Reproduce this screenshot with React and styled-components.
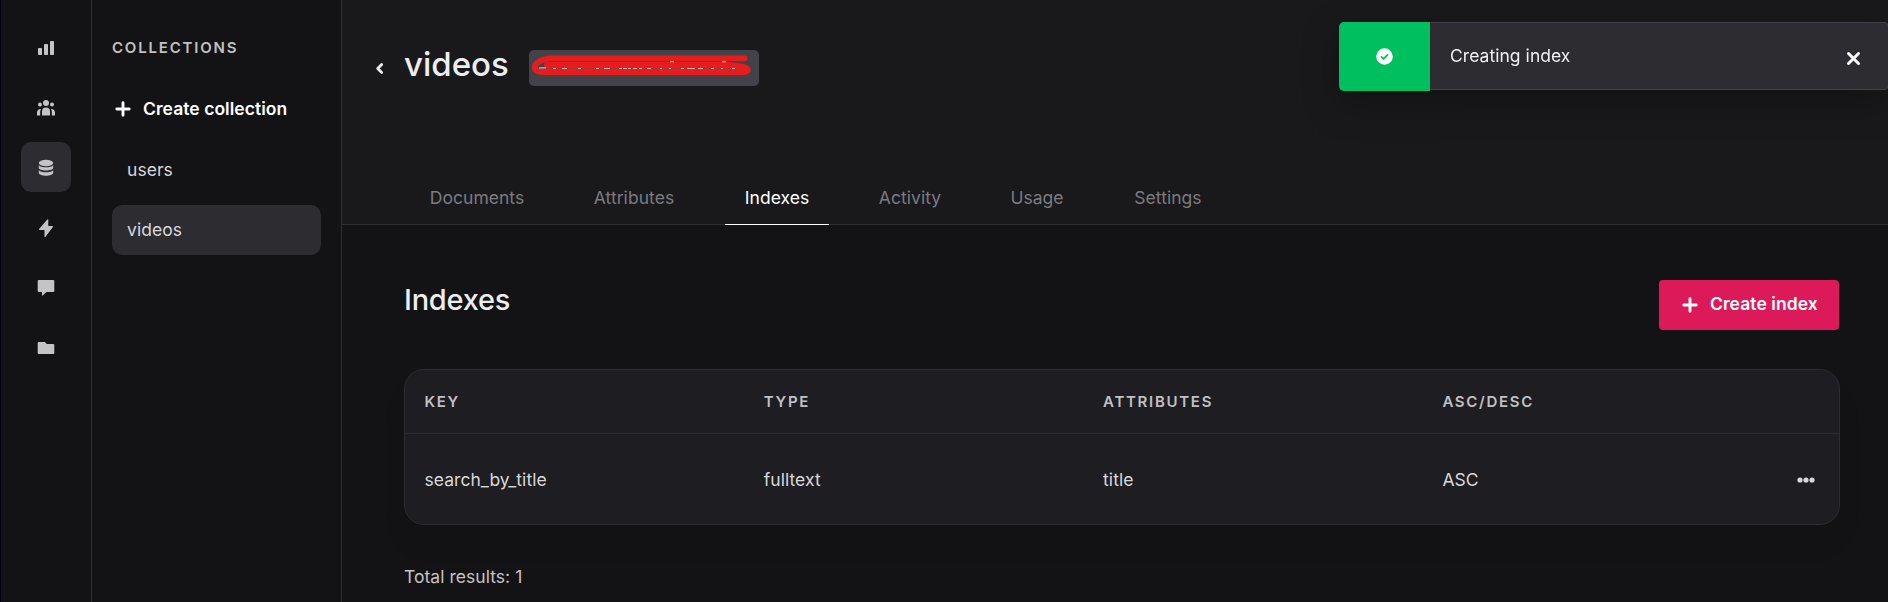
import React from "react";
import styled, { createGlobalStyle } from "styled-components";

const Global = createGlobalStyle`
  *, *::before, *::after { box-sizing: border-box; }
  html, body { margin: 0; padding: 0; background: #131315; }
  body { font-family: Inter, "Liberation Sans", sans-serif; font-size: 17.5px; letter-spacing: 0.04px; color: #d8d8db; overflow: hidden; }
  svg { display: block; flex: none; }
  button { font: inherit; color: inherit; background: none; border: 0; padding: 0; }
`;

const Page = styled.div`
  display: flex;
  width: 100%;
  height: 602px;
  position: relative;
  border-left: 1px solid #02030f;
  background: #131315;
  overflow: hidden;
`;

const Rail = styled.nav`
  flex: none;
  width: 91px;
  border-right: 1px solid #303034;
  padding: 22px 0 0 20px;
  display: flex;
  flex-direction: column;
  gap: 10px;
`;

const RailItem = styled.a`
  width: 50px;
  height: 50px;
  padding-top: 2px;
  border-radius: 10px;
  display: flex;
  align-items: center;
  justify-content: center;
  color: #c4c4c7;
  background: ${(p) => (p.$active ? "#2c2c31" : "transparent")};
`;

const Sidebar = styled.aside`
  flex: none;
  width: 250px;
  border-right: 1px solid #303034;
  padding: 38px 20px 0;
`;

const SideTitle = styled.h2`
  margin: 0;
  font-size: 15px;
  line-height: 20px;
  font-weight: 600;
  letter-spacing: 1.8px;
  color: #c1c1c4;
`;

const CreateLink = styled.button`
  display: flex;
  align-items: center;
  gap: 12px;
  margin-top: 37px;
  padding-left: 3px;
  height: 28px;
  font-weight: 600;
  color: #fff;
  letter-spacing: 0.05px;

  span { padding-bottom: 2px; }
`;

const SideList = styled.div`
  margin-top: 22px;
  display: flex;
  flex-direction: column;
  gap: 10px;
`;

const SideItem = styled.a`
  height: 50px;
  padding: 0 15px 2px;
  border-radius: 10px;
  display: flex;
  align-items: center;
  background: ${(p) => (p.$active ? "#2c2c31" : "transparent")};
`;

const Main = styled.main`
  flex: 1;
  min-width: 0;
`;

const Header = styled.header`
  height: 225px;
  background: #19191b;
  border-bottom: 1px solid #2d2d31;
  display: flex;
  flex-direction: column;
  justify-content: space-between;
`;

const TitleRow = styled.div`
  display: flex;
  align-items: flex-start;
  padding: 44px 0 0 33px;
`;

const BackButton = styled.button`
  padding: 18px 20px 0 0;
`;

const Title = styled.h1`
  margin: 0;
  font-size: 33px;
  line-height: 40px;
  font-weight: 540;
  letter-spacing: 0;
  color: #ededf0;
`;

const SectionTitle = styled(Title)`
  font-size: 29px;
  letter-spacing: -0.25px;
`;

const IdTag = styled.div`
  width: 230px;
  height: 36px;
  margin: 6px 0 0 20px;
  border-radius: 5px;
  background: #434248;
`;

const Tabs = styled.div`
  display: flex;
  gap: 31px;
  padding-left: 69px;
  margin-bottom: -1px;
`;

const Tab = styled.a`
  width: ${(p) => p.$width}px;
  height: 54px;
  text-align: center;
  line-height: 54px;
  color: ${(p) => (p.$active ? "#fff" : "#7b7b81")};
  border-bottom: 1px solid ${(p) => (p.$active ? "#fff" : "transparent")};
`;

const Content = styled.section`
  padding: 55px 48px 0 62px;
`;

const SectionHead = styled.div`
  display: flex;
  justify-content: space-between;
  align-items: flex-start;
`;

const PrimaryButton = styled.button`
  width: 180px;
  height: 50px;
  border-radius: 4px;
  background: #dc1a59;
  color: #fff;
  font-weight: 600;
  letter-spacing: 0.08px;
  display: flex;
  align-items: center;
  gap: 12px;
  padding-left: 23px;
  margin-right: 1px;

  span { padding-bottom: 3px; }
`;

const Table = styled.div`
  margin-top: 39px;
  height: 156px;
  border: 1px solid #2d2d31;
  border-radius: 20px;
  background: #1e1d22;
  box-shadow: 0 20px 30px rgba(0, 0, 0, 0.04);
`;

const Row = styled.div`
  display: grid;
  grid-template-columns: repeat(4, 339.3px) 1fr;
  align-items: center;
  height: 91px;
  padding-left: 19.5px;
`;

const HeadRow = styled(Row)`
  height: 64px;
  border-bottom: 1px solid #2d2d31;
  font-size: 15px;
  font-weight: 600;
  letter-spacing: 1.7px;
  color: #c1c1c4;
`;

const More = styled.div`
  display: flex;
  justify-content: flex-end;
  padding-right: 24px;
`;

const Total = styled.p`
  margin: 41px 0 0;
  line-height: 22px;
  color: #c4c4c7;
`;

const Toast = styled.div`
  position: absolute;
  top: 22px;
  left: 1338px;
  width: 550px;
  height: 69px;
  display: flex;
  filter: drop-shadow(0 12px 18px rgba(0, 0, 0, 0.25));
`;

const ToastStatus = styled.div`
  width: 91px;
  background: #00bf5f;
  border-radius: 5px 0 0 5px;
  display: flex;
  align-items: center;
  justify-content: center;
`;

const ToastBody = styled.div`
  flex: 1;
  height: 68px;
  background: #2c2c31;
  border: 1px solid #434248;
  border-left: 0;
  border-radius: 0 5px 5px 0;
  display: flex;
  align-items: center;
  justify-content: space-between;
  padding: 0 27px 0 20px;
  color: #f0f0f2;

  span { padding-bottom: 2px; }
  svg { margin-top: 5px; }
`;

const Plus = () => (
  <svg width="16" height="16" viewBox="0 0 16 16" fill="none" stroke="currentColor" strokeWidth="2.9" strokeLinecap="round">
    <path d="M8 1.8v12.4M1.800 8h12.400" />
  </svg>
);

const railIcons = [
  <g key="chart">
    <rect x="1" y="9" width="4" height="7" rx="0.8" />
    <rect x="7" y="5" width="4" height="11" rx="0.8" />
    <rect x="13" y="2" width="4" height="14" rx="0.8" />
  </g>,
  <g key="people">
    <circle cx="9" cy="4" r="3" />
    <circle cx="3" cy="5.6" r="2" />
    <circle cx="15" cy="5.6" r="2" />
    <path d="M5 16.5v-4a4 4 0 0 1 8 0v4zM0 16.5v-3.300a3.300 3.300 0 0 1 4-3.200q-.8 1.300-.8 3v3.500zM18 16.500v-3.300a3.300 3.300 0 0 0-4-3.200q.8 1.300.8 3v3.500z" />
  </g>,
  <g key="database">
    <ellipse cx="9" cy="4" rx="7.200" ry="3.200" />
    <path d="M1.800 6.300c2 2.700 12.400 2.700 14.400 0v2.500c0 3.600-14.400 3.600-14.400 0zM1.800 11.300c2 2.700 12.400 2.700 14.400 0v2.500c0 3.900-14.400 3.900-14.400 0z" />
  </g>,
  <path key="bolt" d="M10.300.5q1-.7 1 .5v6h4q1.300 0 .6 1L8.500 17.700q-1 .9-1-.5V11H2.700q-1.300 0-.6-1z" />,
  <path key="chat" d="M1.700 1h14.600q1 0 1 1v10q0 1-1 1H9.500L5 17v-4H1.700q-1 0-1-1V2q0-1 1-1z" />,
  <path key="folder" d="M1.700 3h6.100l2 2h6.500q1 0 1 1v8q0 1-1 1H1.700q-1 0-1-1V4q0-1 1-1z" />,
];

const tabs = [
  ["Documents", 132],
  ["Attributes", 120],
  ["Indexes", 104],
  ["Activity", 100],
  ["Usage", 92],
  ["Settings", 108],
];

export default function App() {
  return (
    <>
      <Global />
      <Page>
        <Rail>
          {railIcons.map((icon, i) => (
            <RailItem key={i} $active={i === 2}>
              <svg width="18" height="18" viewBox="0 0 18 18" fill="currentColor">{icon}</svg>
            </RailItem>
          ))}
        </Rail>
        <Sidebar>
          <SideTitle>COLLECTIONS</SideTitle>
          <CreateLink><Plus /><span>Create collection</span></CreateLink>
          <SideList>
            <SideItem>users</SideItem>
            <SideItem $active>videos</SideItem>
          </SideList>
        </Sidebar>
        <Main>
          <Header>
            <TitleRow>
              <BackButton>
                <svg width="9" height="13" viewBox="0 0 9 13" fill="none" stroke="#ededf0" strokeWidth="2.800" strokeLinecap="round" strokeLinejoin="round">
                  <path d="M6.700 2.500 2.700 6.500l4 4" />
                </svg>
              </BackButton>
              <Title>videos</Title>
              <IdTag>
                <svg width="230" height="36" viewBox="0 0 230 36" fill="none" stroke="#e71d1d" strokeLinecap="round" strokeLinejoin="round">
                  <path d="M215.500 8.300H24C12 8.500 5.700 13.500 5.700 17.500C6 21.500 10 22 18 22H213C221.500 22 221 17.500 210 16.200L199 15H18" strokeWidth="5.800" />
                  <path d="M9 18.500H208" stroke="#a3343a" strokeWidth="1.100" />
                  <path d="M10 17.800h7M24 18.500h3M33 18.500h5M49 18.500h3M67 18.500h3M75 18.500h6M90 18.500h3M94 18.500h4M99 18.500h3M104 18.500h4M110 18.500h3M118 18.500h4M131 18.500h2M140 18.500h2M152 18.500h3M158 18.500h8M169 18.500h5M182 18.500h3M192 18.500h2M203 18.500h3M141 11.700h4M193 11.700h4" stroke="#c9b6ba" strokeWidth="1.200" strokeLinecap="butt" />
                </svg>
              </IdTag>
            </TitleRow>
            <Tabs>
              {tabs.map(([name, width]) => (
                <Tab key={name} $width={width} $active={name === "Indexes"}>{name}</Tab>
              ))}
            </Tabs>
          </Header>
          <Content>
            <SectionHead>
              <SectionTitle as="h2">Indexes</SectionTitle>
              <PrimaryButton><Plus /><span>Create index</span></PrimaryButton>
            </SectionHead>
            <Table>
              <HeadRow><span>KEY</span><span>TYPE</span><span>ATTRIBUTES</span><span>ASC/DESC</span></HeadRow>
              <Row>
                <span>search_by_title</span><span>fulltext</span><span>title</span><span>ASC</span>
                <More>
                  <svg width="18" height="6" viewBox="0 0 18 6" fill="#d8d8db">
                    <circle cx="3" cy="3" r="2.600" /><circle cx="9" cy="3" r="2.600" /><circle cx="15" cy="3" r="2.600" />
                  </svg>
                </More>
              </Row>
            </Table>
            <Total>Total results: 1</Total>
          </Content>
        </Main>
        <Toast>
          <ToastStatus>
            <svg width="17" height="17" viewBox="0 0 17 17">
              <circle cx="8.500" cy="8.500" r="8.300" fill="#fff" />
              <path d="m5.500 8.800 2 2 4-4" fill="none" stroke="#00bf5f" strokeWidth="1.700" strokeLinecap="round" strokeLinejoin="round" />
            </svg>
          </ToastStatus>
          <ToastBody>
            <span>Creating index</span>
            <svg width="15" height="15" viewBox="0 0 15 15" fill="none" stroke="#fff" strokeWidth="3" strokeLinecap="round">
              <path d="m2.500 2.500 10 10m0-10-10 10" />
            </svg>
          </ToastBody>
        </Toast>
      </Page>
    </>
  );
}
